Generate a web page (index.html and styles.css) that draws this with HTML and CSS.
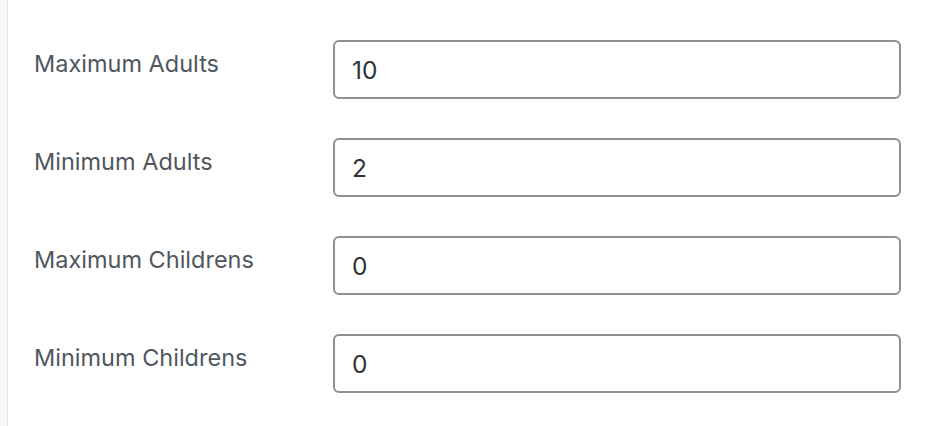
FILE: index.html
```html
<!DOCTYPE html>
<html>
<head>
<meta charset="utf-8">
<link rel="stylesheet" href="styles.css">
</head>
<body>
<div class="panel">
  <div class="form">
    <label class="label" for="max-adults">Maximum Adults</label>
    <input class="field" id="max-adults" type="text" value="10">
    <label class="label" for="min-adults">Minimum Adults</label>
    <input class="field" id="min-adults" type="text" value="2">
    <label class="label" for="max-children">Maximum Childrens</label>
    <input class="field" id="max-children" type="text" value="0">
    <label class="label" for="min-children">Minimum Childrens</label>
    <input class="field" id="min-children" type="text" value="0">
  </div>
</div>
</body>
</html>
```
FILE: styles.css
```css
html, body {
  margin: 0;
  padding: 0;
  height: 100%;
}
body {
  background: #f6f7f7;
  font-family: Inter, "Noto Sans", sans-serif;
}
.panel {
  margin-left: 7px;
  min-height: 100%;
  background: #ffffff;
  border-left: 1px solid #e6e7e8;
  box-sizing: border-box;
}
.form {
  display: grid;
  grid-template-columns: 299px 568px;
  row-gap: 39px;
  padding: 40px 0 0 26px;
}
.label {
  font-size: 23.5px;
  line-height: 28px;
  color: #50575e;
  padding-top: 10px;
}
.field {
  box-sizing: border-box;
  height: 59px;
  width: 568px;
  margin: 0;
  border: 2px solid #8c8f94;
  border-radius: 6px;
  padding: 0 17px;
  font-family: Inter, "Noto Sans", sans-serif;
  font-size: 24.5px;
  color: #2c3338;
  background: #fff;
  outline: none;
}
```
